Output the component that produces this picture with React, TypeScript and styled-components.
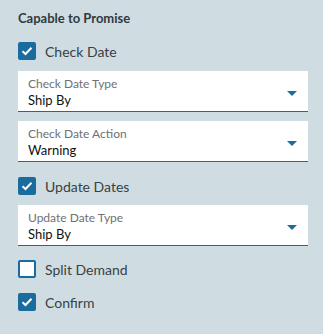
import React from "react";
import styled, { createGlobalStyle } from "styled-components";

const Global = createGlobalStyle`
  html, body { margin: 0; padding: 0; background: #cfdde2; }
  body { font-family: Lato, "Noto Sans", sans-serif; }
`;

const Panel = styled.div`
  width: 323px;
  height: 334px;
  box-sizing: border-box;
  padding: 8px 15px 0 18px;
  display: flex;
  flex-direction: column;
  background: #cfdde2;
`;

const Title = styled.div`
  font-size: 13px;
  font-weight: 700;
  line-height: 20px;
  color: #2f3a40;
`;

const Row = styled.label<{ $mt: number }>`
  display: flex;
  align-items: center;
  gap: 9px;
  height: 30px;
  margin-top: ${(p) => p.$mt}px;
  font-size: 14px;
  color: #3a3f44;
`;

const Box = styled.span<{ $checked: boolean }>`
  width: 18px;
  height: 18px;
  box-sizing: border-box;
  border-radius: 2px;
  background: ${(p) => (p.$checked ? "#1a6b9e" : "#ffffff")};
  border: 2px solid #1a6b9e;
  display: flex;
  align-items: center;
  justify-content: center;
`;

const Select = styled.div<{ $mt: number }>`
  position: relative;
  margin-top: ${(p) => p.$mt}px;
  height: 41px;
  box-sizing: border-box;
  background: #ffffff;
  border-bottom: 1.5px solid #1a6b9e;
  padding: 5px 10px 0;
  display: flex;
  flex-direction: column;
`;

const SelLabel = styled.div`
  font-size: 12px;
  line-height: 16px;
  color: #6e7175;
`;

const SelValue = styled.div`
  font-size: 13px;
  line-height: 16px;
  color: #111;
`;

const Arrow = styled.span`
  position: absolute;
  right: 11px;
  top: 20px;
  width: 0;
  height: 0;
  border-left: 5px solid transparent;
  border-right: 5px solid transparent;
  border-top: 5px solid #1a6b9e;
`;

const Check = ({ checked }: { checked: boolean }) => (
  <Box $checked={checked}>
    {checked && (
      <svg width="12" height="10" viewBox="0 0 12 10">
        <path d="M1.5 5.2 L4.5 8 L10.5 1.8" fill="none" stroke="#fff" strokeWidth="2" />
      </svg>
    )}
  </Box>
);

const CheckRow = ({ label, checked, mt }: { label: string; checked: boolean; mt: number }) => (
  <Row $mt={mt}>
    <Check checked={checked} />
    <span>{label}</span>
  </Row>
);

const Dropdown = ({ label, value, mt }: { label: string; value: string; mt: number }) => (
  <Select $mt={mt}>
    <SelLabel>{label}</SelLabel>
    <SelValue>{value}</SelValue>
    <Arrow />
  </Select>
);

export default function App() {
  return (
    <>
      <Global />
      <Panel>
        <Title>Capable to Promise</Title>
        <CheckRow label="Check Date" checked mt={8} />
        <Dropdown label="Check Date Type" value="Ship By" mt={5} />
        <Dropdown label="Check Date Action" value="Warning" mt={9} />
        <CheckRow label="Update Dates" checked mt={9} />
        <Dropdown label="Update Date Type" value="Ship By" mt={4} />
        <CheckRow label="Split Demand" checked={false} mt={8} />
        <CheckRow label="Confirm" checked mt={3} />
      </Panel>
    </>
  );
}
